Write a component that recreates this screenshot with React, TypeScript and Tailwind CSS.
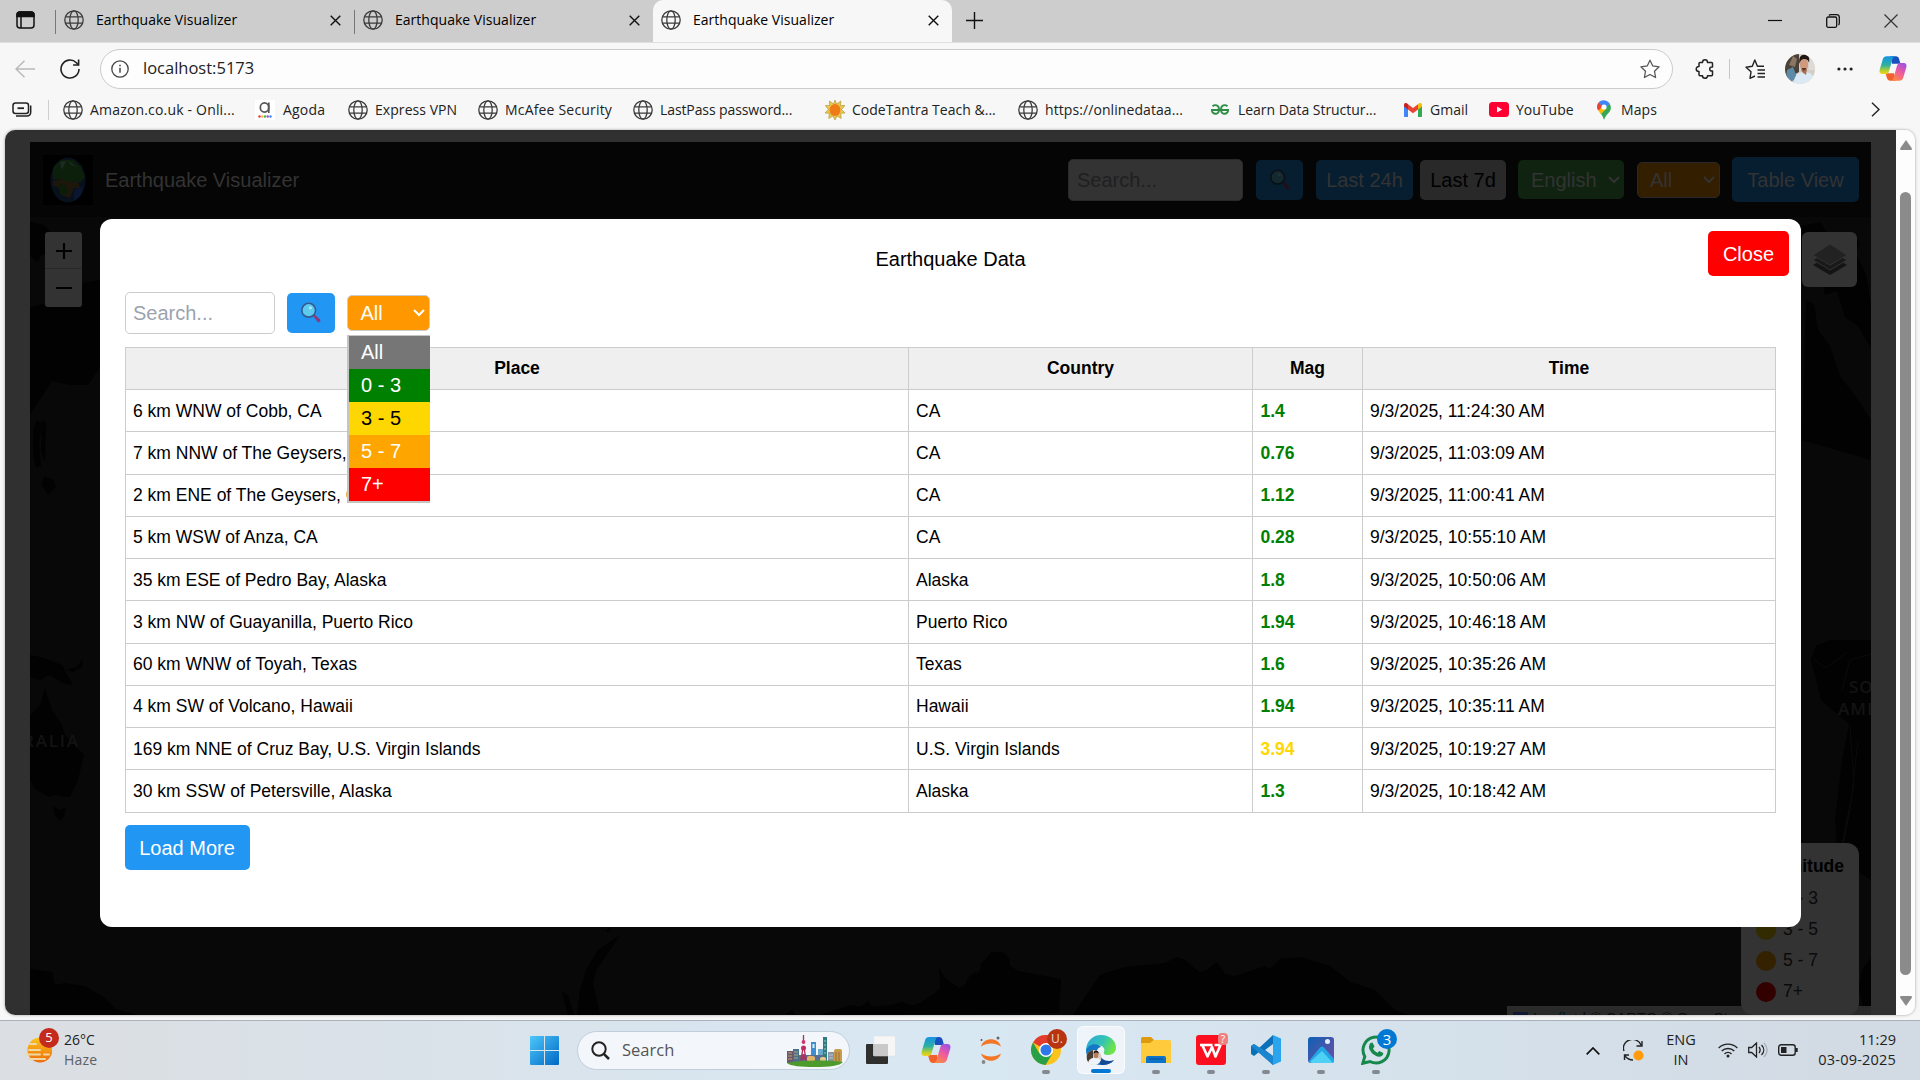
import React from "react";
import { clsx } from "clsx";

type P = { className?: string };

function Globe({ className = "" }: P) {
  return (
    <svg className={clsx("h-5 w-5 shrink-0", className)} viewBox="0 0 20 20" fill="none" stroke="#3b3b3b" strokeWidth="1.3">
      <circle cx="10" cy="10" r="9.2" />
      <ellipse cx="10" cy="10" rx="4.2" ry="9.2" />
      <path d="M1.6 6.9h16.8M1.6 13.1h16.8" />
    </svg>
  );
}

function Cross({ className = "" }: P) {
  return (
    <svg className={clsx("h-[11px] w-[11px] shrink-0", className)} viewBox="0 0 11 11" stroke="#111" strokeWidth="1.4">
      <path d="M.7.7l9.6 9.6M10.3.7L.7 10.3" />
    </svg>
  );
}

function Lens({ dim = false }: { dim?: boolean }) {
  return (
    <svg className="h-[22px] w-[22px]" viewBox="0 0 22 22" fill="none">
      <path d="M12.6 13.4l1.6-1.2 6 5.2c1 1.2-1 3.6-2.4 2.6z" fill={dim ? "#240d1a" : "#8b3a7d"} />
      <circle cx="8.7" cy="8.2" r="6.9" fill={dim ? "#13292f" : "#5ccbee"} stroke={dim ? "#091116" : "#37598f"} strokeWidth="1.6" />
      <circle cx="10.3" cy="5.8" r="1.6" fill={dim ? "#1d3338" : "#a9e8fa"} />
    </svg>
  );
}

function Chevron({ className = "" }: P) {
  return (
    <svg className={clsx("h-[8px] w-[12px] shrink-0", className)} viewBox="0 0 12 8" fill="none" stroke="currentColor" strokeWidth="2">
      <path d="M1 1l5 5 5-5" />
    </svg>
  );
}

function Copilot({ className = "", id }: P & { id: string }) {
  return (
    <svg className={className} viewBox="0 0 30 28">
      <defs>
        <linearGradient id={id + "a"} x1="0" y1="0" x2="0" y2="1">
          <stop offset="0" stopColor="#1494e4" />
          <stop offset=".5" stopColor="#2fb1a0" />
          <stop offset=".8" stopColor="#b6cf31" />
          <stop offset="1" stopColor="#f5d21c" />
        </linearGradient>
        <linearGradient id={id + "b"} x1=".8" y1="0" x2=".3" y2="1">
          <stop offset="0" stopColor="#a04fe8" />
          <stop offset=".5" stopColor="#ee5c9d" />
          <stop offset="1" stopColor="#fb8a43" />
        </linearGradient>
      </defs>
      <path d="M12 1h6c2 0 3 1 3.600 3l1.400 5h-9z" fill="#1a4fc0" />
      <path d="M18 27h-6c-2 0-3-1-3.600-3L7 19h9z" fill="#f2602c" />
      <path d="M8.500 1H18c-2 0-3 1-3.700 3.400l-3.500 12.200C10 19 9 20 7 20H3.600C1 20 0 18 .7 15.400L4 4.400C4.700 2 6 1 8.500 1z" fill={`url(#${id}a)`} />
      <path d="M21.500 27H12c2 0 3-1 3.700-3.400l3.500-12.200C20 9 21 8 23 8h3.400c2.600 0 3.600 2 2.900 4.600L26 23.600C25.300 26 24 27 21.500 27z" fill={`url(#${id}b)`} />
    </svg>
  );
}

/* ---------- browser chrome ---------- */

const tabTitle = "-mt-px ml-3 w-[142px] whitespace-nowrap text-[14px] tracking-[0.020px] text-black";

function TabStrip() {
  return (
    <div className="flex h-[42px] bg-[#cdcdcd]">
      <div className="flex h-10 w-[55px] items-center pl-4">
        <svg className="h-[18px] w-[19px]" viewBox="0 0 19 18" fill="none" stroke="#111" strokeWidth="1.500">
          <rect x="1" y="1" width="17" height="16" rx="3" />
          <path d="M1 4C1 2 2 1 4 1h11c2 0 3 1 3 3v1.500H1z" fill="#111" />
          <path d="M5 5v12" />
        </svg>
      </div>
      <div className="flex h-10 w-[299px] items-center">
        <div className="mt-1 h-6 w-px bg-[#777]" />
        <Globe className="ml-2" />
        <span className={tabTitle}>Earthquake Visualizer</span>
        <Cross className="ml-[92px] mt-px" />
      </div>
      <div className="flex h-10 w-[299px] items-center">
        <div className="mt-1 h-6 w-px bg-[#777]" />
        <Globe className="ml-2" />
        <span className={tabTitle}>Earthquake Visualizer</span>
        <Cross className="ml-[92px] mt-px" />
      </div>
      <div className="flex h-[42px] w-[299px] rounded-t-[10px] bg-[#f7f7f7]">
        <div className="flex h-10 items-center">
          <Globe className="ml-2" />
          <span className={tabTitle}>Earthquake Visualizer</span>
          <Cross className="ml-[93px] mt-px" />
        </div>
      </div>
      <div className="flex h-10 items-center pl-[14px]">
        <svg className="h-[17px] w-[17px]" viewBox="0 0 17 17" stroke="#111" strokeWidth="1.400">
          <path d="M0 8.500h17M8.500 0v17" />
        </svg>
      </div>
      <div className="ml-auto flex h-[42px] items-center gap-[44px] pr-[22px]">
        <svg className="h-[14px] w-[14px]" viewBox="0 0 14 14" stroke="#111" strokeWidth="1.200">
          <path d="M0 6.500h14" />
        </svg>
        <svg className="h-[14px] w-[14px]" viewBox="0 0 14 14" fill="none" stroke="#111" strokeWidth="1.300">
          <rect x=".7" y="3" width="10" height="10.300" rx="1.500" />
          <path d="M3 1.500C3.500.8 4 .7 5 .7h5.500c2 0 2.800 1 2.800 2.800V9c0 1-.2 1.500-.8 2" />
        </svg>
        <svg className="h-[14px] w-[14px]" viewBox="0 0 14 14" stroke="#333" strokeWidth="1.200">
          <path d="M.5.5l13 13M13.500.5l-13 13" />
        </svg>
      </div>
    </div>
  );
}

function AddressBar() {
  return (
    <div className="flex h-[47px] items-center border-t border-[#e0e0e0] bg-[#f7f7f7] pt-[5px]">
      <svg className="ml-[15px] h-[18px] w-5" viewBox="0 0 20 18" fill="none" stroke="#b9b9b9" strokeWidth="1.500">
        <path d="M20 9H1M9.500.7L1 9l8.500 8.300" />
      </svg>
      <svg className="ml-[25px] h-5 w-5" viewBox="0 0 20 20" fill="none" stroke="#222" strokeWidth="1.600">
        <path d="M19 10a9 9 0 1 1-2.600-6.300L18.500 6" />
        <path d="M18.600.5V6h-5.500" />
      </svg>
      <div className="ml-5 flex h-10 w-[1573px] items-center rounded-full border border-[#cbcbcb] bg-[#fdfdfd]">
        <svg className="ml-2.5 h-[18px] w-[18px]" viewBox="0 0 18 18" fill="none" stroke="#444" strokeWidth="1.300">
          <circle cx="9" cy="9" r="8.200" />
          <path d="M9 7.800v5M9 4.700v1.600" strokeWidth="1.500" />
        </svg>
        <span className="-mt-px ml-[14px] text-[16.500px] text-[#222]">localhost:5173</span>
        <svg className="ml-auto mr-[11px] h-5 w-[22px]" viewBox="0 0 22 21" fill="none" stroke="#555" strokeWidth="1.300" strokeLinejoin="round">
          <path d="M11 1.200l2.900 6.100 6.700.9-4.900 4.600 1.200 6.700-5.900-3.200-5.900 3.200 1.200-6.700L1.400 8.200l6.700-.9z" />
        </svg>
      </div>
      <svg className="ml-[22px] h-5 w-[20px]" viewBox="0 0 20 20" fill="none" stroke="#222" strokeWidth="1.500" strokeLinejoin="round">
        <path d="M5 3.500h2.500C7.500-.1 12.500-.1 12.500 3.500H16.500a1 1 0 0 1 1 1V8c-3.600-.7-3.800 4.700 0 4v3.700a1 1 0 0 1-1 1h-4c.2 3.400-5 3.400-5 0H5a1 1 0 0 1-1-1V12.500C.3 12.400.3 7.400 4 7.500v-3a1 1 0 0 1 1-1z" />
      </svg>
      <div className="ml-[14px] h-5 w-px bg-[#c6c6c6]" />
      <svg className="ml-[15px] h-5 w-5" viewBox="0 0 20 20" fill="none" stroke="#222" strokeWidth="1.400" strokeLinejoin="round">
        <path d="M10 17l-5 2.300 1-6.500L1 8.200l6.300-.9L9.800 1l2.600 6.300H19M12.500 11H20M12.500 14.500H20M12.500 18H20" />
      </svg>
      <svg className="ml-5 h-[30px] w-[30px]" viewBox="0 0 30 30">
        <clipPath id="face"><circle cx="15" cy="15" r="15" /></clipPath>
        <g clipPath="url(#face)">
          <rect width="30" height="30" fill="#d5cec6" />
          <path d="M0 0h14v18L0 26z" fill="#4a4238" />
          <path d="M8 2l4 3-2 8-6-2z" fill="#8a7663" />
          <path d="M22 0h8v16h-6z" fill="#dcdbd6" />
          <path d="M2 16l6-3 4 10-8 7H0z" fill="#5d8aa6" />
          <path d="M9 30c0-9 4-12 10-12 8 0 10 4 11 12z" fill="#dbe9f5" />
          <path d="M16 15h6l-1 6-4-3z" fill="#a86f52" />
          <ellipse cx="19" cy="10.500" rx="4.200" ry="6" fill="#d09a7e" />
          <path d="M14.500 10c-1-6 1-9.500 5-9.500s5.500 3 4.500 8.500c-.8-3-2-4-4.500-4s-4 1-5 5z" fill="#211611" />
          <path d="M16.500 14h5l-1.500 2.500h-2z" fill="#5a3527" />
        </g>
      </svg>
      <svg className="ml-[22px] h-1 w-4" viewBox="0 0 16 4" fill="#222">
        <circle cx="1.900" cy="2" r="1.600" /><circle cx="8" cy="2" r="1.600" /><circle cx="14.100" cy="2" r="1.600" />
      </svg>
      <Copilot id="ct" className="ml-[26px] h-[27px] w-[28px]" />
    </div>
  );
}

const bm = "flex shrink-0 items-center whitespace-nowrap";

function Bookmarks() {
  return (
    <div className="flex h-[41px] items-center bg-[#f7f7f7] text-[14px] text-[#222]">
      <svg className="ml-3 h-[15px] w-5" viewBox="0 0 20 15" fill="none" stroke="#222" strokeWidth="1.500">
        <rect x="1" y="1" width="15.500" height="10.500" rx="2.500" />
        <path d="M5.500 6.200h6.500" strokeWidth="1.800" />
        <path d="M18.700 3.500v6.500c0 2.500-1.500 4-4 4H4" />
      </svg>
      <div className="ml-4 h-5 w-px bg-[#cfcfcf]" />
      <div className={clsx(bm, "ml-[14px] w-[192px]")}><Globe /><span className="ml-[7px] tracking-[0.180px]">Amazon.co.uk - Onli...</span></div>
      <div className={clsx(bm, "w-[93px]")}>
        <svg className="h-5 w-5" viewBox="0 0 20 20" fill="none">
          <rect width="20" height="20" fill="#fff" />
          <ellipse cx="9.500" cy="7.500" rx="4.200" ry="4.600" stroke="#555" strokeWidth="1.700" />
          <path d="M13.800 2.500v10.500" stroke="#555" strokeWidth="1.700" />
          <circle cx="4.500" cy="16.500" r="1.200" fill="#e33" /><circle cx="7.300" cy="16.500" r="1.200" fill="#fb3" /><circle cx="10" cy="16.500" r="1.200" fill="#3b5" /><circle cx="12.700" cy="16.500" r="1.200" fill="#95c" /><circle cx="15.500" cy="16.500" r="1.200" fill="#38e" />
        </svg>
        <span className="ml-2 tracking-[0.180px]">Agoda</span>
      </div>
      <div className={clsx(bm, "w-[130px]")}><Globe /><span className="ml-[7px] tracking-[0.060px]">Express VPN</span></div>
      <div className={clsx(bm, "w-[155px]")}><Globe /><span className="ml-[7px] tracking-[0.180px]">McAfee Security</span></div>
      <div className={clsx(bm, "w-[192px]")}><Globe /><span className="ml-[7px] tracking-[-0.100px]">LastPass password...</span></div>
      <div className={clsx(bm, "w-[193px]")}>
        <svg className="h-5 w-5" viewBox="0 0 20 20">
          <path d="M10 0l1.600 4L15.800 1l-.2 4.500L20 5.500 16.500 9.500 20 13l-4.300.3.500 5.200-4-2.500L10 20l-2.200-4-4 2.500.5-5.200L0 13l3.300-3.500L.3 5.500l4.200 0L4.500 1l4 3z" fill="#e9c84b" stroke="#a98e32" strokeWidth=".6" />
          <ellipse cx="10" cy="10" rx="5.500" ry="6" fill="#ee7a18" />
        </svg>
        <span className="ml-[7px] tracking-[0.020px]">CodeTantra Teach &amp;...</span>
      </div>
      <div className={clsx(bm, "w-[193px]")}><Globe /><span className="ml-[7px] tracking-[0.080px]">https://onlinedataa...</span></div>
      <div className={clsx(bm, "w-[193px]")}>
        <svg className="h-[11px] w-[18px]" viewBox="0 0 18 11" fill="none" stroke="#2f8d46" strokeWidth="1.900">
          <path d="M0 6h18M1.500 2.300C4 .2 8 1 8 5.500S4 10.800 1.700 8.500C1 7.800 1 7 1 6M16.500 2.300C14 .2 10 1 10 5.500s4 5.300 6.300 3c.7-.7.7-1.500.7-2.500" />
        </svg>
        <span className="ml-[9px] tracking-[-0.040px]">Learn Data Structur...</span>
      </div>
      <div className={clsx(bm, "w-[85px]")}>
        <svg className="h-[14px] w-[18px]" viewBox="0 0 18 14">
          <path d="M0 2.500V13c0 .6.400 1 1 1h3V5z" fill="#4285f4" /><path d="M18 2.500V13c0 .6-.4 1-1 1h-3V5z" fill="#34a853" />
          <path d="M14 1.200L15.200.3C16.500-.5 18 .3 18 2v1.500L14 6.500z" fill="#fbbc04" /><path d="M4 1.200L2.800.3C1.500-.5 0 .3 0 2v1.500L4 6.500z" fill="#c5221f" />
          <path d="M4 1.200l5 3.800 5-3.800v5.300l-5 3.800-5-3.800z" fill="#ea4335" />
        </svg>
        <span className="ml-[8px]">Gmail</span>
      </div>
      <div className={clsx(bm, "w-[108px]")}>
        <svg className="h-[15px] w-5" viewBox="0 0 20 15"><rect width="20" height="15" rx="3.500" fill="#ff0033" /><path d="M8 4.500v6l5.200-3z" fill="#fff" /></svg>
        <span className="ml-[7px]">YouTube</span>
      </div>
      <div className={clsx(bm, "w-[100px]")}>
        <svg className="h-5 w-[14px]" viewBox="0 0 14 20">
          <path d="M7 20C6 16 4.500 14.500 2.500 12L12.700 3.500C15 8 13.500 11 11 13.500 9 15.700 8 17 7 20z" fill="#34a853" />
          <path d="M2.500 12C1 10.500 0 9 0 7l5-.5L9 9l-5 5z" fill="#fbbc04" />
          <path d="M0 7c0-2 .7-3.500 2-4.700L6 6l-4.500 4.500C.5 9.300 0 8 0 7z" fill="#ea4335" />
          <path d="M1.500 2.700C3-0 9-1.500 12.700 3.500L8 9 4 5z" fill="#4285f4" />
          <circle cx="7" cy="7" r="2.600" fill="#fff" />
        </svg>
        <span className="ml-[10px] tracking-[0.100px]">Maps</span>
      </div>
      <svg className="ml-auto mr-[40px] h-[15px] w-[9px]" viewBox="0 0 9 15" fill="none" stroke="#222" strokeWidth="1.400"><path d="M1 .7l7 6.800-7 6.800" /></svg>
    </div>
  );
}

/* ---------- dimmed page behind the dialog ---------- */

function MapCanvas() {
  return (
    <svg className="absolute inset-0 h-full w-full" viewBox="30 217 1841 798" preserveAspectRatio="none">
      <rect x="30" y="217" width="1841" height="798" fill="#080808" />
      <g fill="#020202">
        <path d="M30 222l14 3 8 9-6 5 10 8-8 3 3 8-9-4-4 8-8-6zM30 307l30-7 22-17 18-3v87l-12 18-18 0-18-4-22 34z" />
        <path d="M33 430l4-10 5 4-3 20 2 22-5 2-3-14zM42 420l4 2-1 40-4-10zM44 476l9 3 3 8-8 8-6-10z" />
        <path d="M30 655l14 3 18 7 11 20-10-2-13-8-10 5-10-3zM66 670l10-3 7-8-1 8-9 5zM30 715l10-10 5-17 7 22 10 15 3 10 19 20-6 25-8 17-15-2-6 2-14-8-5-9zM53 806l6 4 7-3-2 10-5 4-5-8z" />
        <path d="M30 969l22 3 3 13 10-2 20 3 20 12 8 8 2 3 11 3 11 3H30z" />
        <path d="M577 1015l3-25 6-20 12-20 22-15-12 18-12 18-3 12 7 32zM562 992l6 3 6 20h-6zM606 930l6-3-4 6z" />
        <path d="M786 1014l6-4 3 5zM820 1015l30-10 10 2 8-6 4 6 18-2 12-3 10 4 8-3 15-10 5-5-1-20 6 10 14 10 6-3 5-10 10-4 1-8 5-4 5-7h12l6 6 1 8 8 5 43 8-2 34zM1073 1015l10-15 17-25 25-8 40-4 12-6 8 3 14 12 8-2 10-8 8 12 10 2 30-10 5 3 10-10 20-2 30 9 20 16 25 8 20 20 20 7z" />
        <path d="M1802 226l18-4 8 12 12 4 6-6 14 10-4 12 10 20 5 30v45l-12-22-14-10-8-26-12 4-5-20-12-2zM1806 300l8 4 4 26 12 16 10 30 14 18 17 26v40l-69-20z" />
        <path d="M1811 660l5-14 14-6h41v240l-15-10-18-10-3-40 7-60 7-36-28-24z" />
        <path d="M1862 970l9-12v50h-8l-4-20z" />
      </g>
      <g fill="none" stroke="#0b0b0b"><path d="M1813 658l12 10 12-8 10-8M1842 690l8-30 21-6M1855 1000v-20M1850 725l4 60-12 60M1858 740l-8 70-8 40" /></g>
      <g fill="#131313" fontFamily="Open Sans, sans-serif" fontSize="17" fontWeight="600">
        <text x="23" y="747" textLength="55">RALIA</text><text x="1849" y="693" letterSpacing="1">SOUTH</text><text x="1838" y="715" letterSpacing="1">AMERICA</text>
      </g>
    </svg>
  );
}

function SiteHeader() {
  return (
    <div className="flex h-[75px] items-center bg-[#050505] text-[20px] text-[#333]">
      <div className="ml-[13px] flex h-[50px] w-[50px] items-center justify-center bg-black">
        <svg className="h-[46px] w-9" viewBox="0 0 36 46">
          <clipPath id="disc"><ellipse cx="18" cy="23" rx="17.500" ry="22.500" /></clipPath>
          <g clipPath="url(#disc)">
            <rect width="36" height="46" fill="#08101c" />
            <path d="M3 10l8-7 12 0 8 7 4 10-5 6-7-2-5 3-9-5-6 1z" fill="#0b1f0b" />
            <path d="M3 24l9-2 7 3 8-1 4 7-7 0-4 10-9-3-3-8-5-1z" fill="#1c170a" />
            <path d="M9 27l6 1 3 7-5 4-3-5z" fill="#0b1d08" />
            <path d="M10 5l6-1-4 9zM17 3l10 7-6-2z" fill="#1e2a26" />
            <path d="M24 33l9-4-2 10-7 5z" fill="#0a1530" />
          </g>
        </svg>
      </div>
      <span className="ml-3 whitespace-nowrap">Earthquake Visualizer</span>
      <div className="ml-auto flex items-center">
        <div className="flex h-[42px] w-[175px] items-center rounded-[5px] border border-[#292929] bg-[#333] pl-2 text-[#1f2022]">Search...</div>
        <div className="ml-[13px] flex h-10 w-[47px] items-center justify-center rounded-[5px] bg-[#071e31]"><Lens dim /></div>
        <div className="ml-[13px] flex h-10 w-[97px] items-center justify-center rounded-[5px] bg-[#071e31]">Last 24h</div>
        <div className="ml-[7px] flex h-10 w-[86px] items-center justify-center rounded-[5px] bg-[#292929] text-black">Last 7d</div>
        <div className="ml-3 flex h-[39px] w-[106px] items-center justify-between rounded-[5px] bg-[#0f2310] pl-[13px] pr-1"><span>English</span><Chevron /></div>
        <div className="ml-[13px] flex h-9 w-[83px] items-center justify-between rounded-[5px] border border-[#292929] bg-[#331e00] pl-3 pr-1"><span>All</span><Chevron /></div>
        <div className="ml-3 mr-3 flex h-[45px] w-[127px] items-center justify-center rounded-[5px] bg-[#071e31]">Table View</div>
      </div>
    </div>
  );
}

const legend = [
  { label: "0 - 3", dot: "bg-[#001a00]" },
  { label: "3 - 5", dot: "bg-[#332b00]" },
  { label: "5 - 7", dot: "bg-[#332100]" },
  { label: "7+", dot: "bg-[#330000]" },
];

function MapArea() {
  return (
    <div className="relative h-[798px] overflow-hidden">
      <MapCanvas />
      <div className="absolute left-[15px] top-[15px] w-[37px] overflow-hidden rounded-[3px] bg-[#333]">
        <div className="flex h-[37px] items-center justify-center border-b border-[#292929] pl-px pt-px">
          <svg className="h-4 w-4" viewBox="0 0 16 16" stroke="#000" strokeWidth="2.200"><path d="M0 8h16M8 0v16" /></svg>
        </div>
        <div className="flex h-[38px] items-center justify-center pl-px">
          <svg className="h-4 w-4" viewBox="0 0 16 16" stroke="#000" strokeWidth="2"><path d="M0 8h16" /></svg>
        </div>
      </div>
      <div className="absolute right-[14px] top-[15px] flex h-[55px] w-[55px] items-center justify-center rounded-md bg-[#333]">
        <svg className="h-[33px] w-[34px]" viewBox="0 0 34 33">
          <path d="M17 12L34 22 17 32 0 22z" fill="#141414" /><path d="M17 7l17 10-17 10L0 17z" fill="#1a1a1a" stroke="#333" /><path d="M17 1l17 11-17 10L0 12z" fill="#222" stroke="#333" />
        </svg>
      </div>
      <div className="absolute right-0 top-[789px] flex h-[22px] w-[364px] items-center bg-[#2a2a2a] pl-[6px] text-[15px] leading-none text-[#0a0a0a]">
        <span className="mr-[5px] h-2.5 w-[15px] bg-[#0f1a30]" />
        <span className="whitespace-nowrap"><span className="text-[#001823]">Leaflet</span> | © CARTO © OpenStreetMap contributors</span>
      </div>
      <div className="absolute right-3 top-[626px] h-[172px] w-[118px] rounded-[12px] bg-[#333] px-[15px] pt-[10px] text-[17.500px] text-[#0a0a0a]">
        <div className="flex h-[26px] items-center justify-end font-bold text-black">Magnitude</div>
        <div className="mt-[4px]">
          {legend.map((l) => (
            <div key={l.label} className="flex h-[31px] items-center gap-[7px]">
              <span className={clsx("h-5 w-5 rounded-full", l.dot)} />{l.label}
            </div>
          ))}
        </div>
      </div>
    </div>
  );
}

/* ---------- dialog ---------- */

const rows = [
  ["6 km WNW of Cobb, CA", "CA", "1.4", "9/3/2025, 11:24:30 AM", "h-[42px]", "pt-[2px]"],
  ["7 km NNW of The Geysers, CA", "CA", "0.76", "9/3/2025, 11:03:09 AM", "h-[43px]", "pt-[1px]"],
  ["2 km ENE of The Geysers, CA", "CA", "1.12", "9/3/2025, 11:00:41 AM", "h-[42px]", "pt-0"],
  ["5 km WSW of Anza, CA", "CA", "0.28", "9/3/2025, 10:55:10 AM", "h-[42px]", "pt-0"],
  ["35 km ESE of Pedro Bay, Alaska", "Alaska", "1.8", "9/3/2025, 10:50:06 AM", "h-[42px]", "pt-[2px]"],
  ["3 km NW of Guayanilla, Puerto Rico", "Puerto Rico", "1.94", "9/3/2025, 10:46:18 AM", "h-[43px]", "pt-[1px]"],
  ["60 km WNW of Toyah, Texas", "Texas", "1.6", "9/3/2025, 10:35:26 AM", "h-[42px]", "pt-0"],
  ["4 km SW of Volcano, Hawaii", "Hawaii", "1.94", "9/3/2025, 10:35:11 AM", "h-[42px]", "pt-0"],
  ["169 km NNE of Cruz Bay, U.S. Virgin Islands", "U.S. Virgin Islands", "3.94", "9/3/2025, 10:19:27 AM", "h-[42px]", "pt-[2px]"],
  ["30 km SSW of Petersville, Alaska", "Alaska", "1.3", "9/3/2025, 10:18:42 AM", "h-[43px]", "pt-[1px]"],
];

const cell = "border-b border-r border-[#ccc] p-0";

function Dialog() {
  return (
    <div className="absolute left-[95px] top-[89px] flex h-[708px] w-[1701px] flex-col rounded-[12px] bg-white px-[25px] font-['Liberation_Sans',Arial,sans-serif] text-black">
      <div className="mt-[25px] flex h-[30px] items-center justify-center text-[20px]">Earthquake Data</div>
      <button className="absolute right-3 top-3 h-[45px] w-[81px] rounded-[5px] bg-[#ff0000] text-[20px] text-white">Close</button>
      <div className="mt-[18px] flex h-[42px] items-center text-[20px]">
        <div className="flex h-[42px] w-[150px] items-center rounded-[5px] border border-[#ccc] pl-[7px] text-[#9ca3af]">Search...</div>
        <button className="ml-3 flex h-10 w-12 items-center justify-center rounded-[5px] bg-[#2196f3]"><Lens /></button>
        <div className="relative ml-3 flex h-9 w-[83px] items-center justify-between rounded-[5px] border border-[#ccc] bg-[#ff9800] pl-[12.500px] pr-1 text-white">
          <span>All</span><Chevron />
          <div className="absolute -left-px top-[39px] z-10 w-[83px] border-b-2 border-l-2 border-t border-[#c4c4c4] [&>div]:flex [&>div]:h-[33px] [&>div]:items-center [&>div]:pb-[2px] [&>div]:pl-3">
            <div className="bg-[#767676]">All</div>
            <div className="bg-[#008000]">0 - 3</div>
            <div className="bg-[#ffd700] text-black">3 - 5</div>
            <div className="bg-[#ffa500]">5 - 7</div>
            <div className="bg-[#ff0000]">7+</div>
          </div>
        </div>
      </div>
      <table className="mt-[13px] w-[1651px] table-fixed border-separate border-spacing-0 border-l border-t border-[#ccc] text-[17.500px]">
        <colgroup><col className="w-[783px]" /><col className="w-[344px]" /><col className="w-[110px]" /><col /></colgroup>
        <thead>
          <tr className="h-[42px] bg-[#efefef]">
            {["Place", "Country", "Mag", "Time"].map((h) => <th key={h} className={clsx(cell, "text-center font-bold leading-none")}>{h}</th>)}
          </tr>
        </thead>
        <tbody>
          {rows.map(([p, c, m, t, h, pt]) => (
            <tr key={p} className={h}>
              <td className={cell}><div className={clsx("pl-[7px] leading-none", pt)}>{p}</div></td>
              <td className={cell}><div className={clsx("pl-[7px] leading-none", pt)}>{c}</div></td>
              <td className={cell}><div className={clsx("pl-[7.500px] font-bold leading-none", pt, Number(m) > 3 ? "text-[#ffd700]" : "text-[#008000]")}>{m}</div></td>
              <td className={cell}><div className={clsx("pl-[7px] leading-none", pt)}>{t}</div></td>
            </tr>
          ))}
        </tbody>
      </table>
      <button className="mt-3 h-[45px] w-[125px] rounded-[5px] bg-[#2196f3] pr-px text-[20px] text-white">Load More</button>
    </div>
  );
}

/* ---------- taskbar ---------- */

function TaskCell({ children, active, running }: { children: React.ReactNode; active?: boolean; running?: boolean }) {
  return (
    <div className={clsx("relative mr-[7px] flex h-12 w-12 items-center justify-center rounded-md", active && "border border-white/70 bg-[#eef4fa]")}>
      {children}
      {(active || running) && <span className={clsx("absolute bottom-0 h-1 rounded-full", active ? "w-5 bg-[#0078d4]" : "w-2 bg-[#838990]")} />}
    </div>
  );
}

function Skyline() {
  return (
    <svg className="h-8 w-14" viewBox="0 0 56 32">
      <rect x="0" y="16" width="6" height="12" fill="#6b5670" /><rect x="6" y="14" width="6" height="14" fill="#47708b" />
      <path d="M1 18h4M1 21h4M1 24h4M7 17h4M7 20h4M7 23h4" stroke="#d9b26a" strokeWidth=".8" />
      <rect x="24" y="7" width="5" height="20" fill="#3f8ed0" /><rect x="25.500" y="9" width="2" height="4" fill="#d9effa" />
      <rect x="36" y="2" width="4" height="25" fill="#2f7c80" /><rect x="31" y="14" width="5" height="12" fill="#6aa9c9" /><rect x="41" y="17" width="6" height="10" fill="#8a93a5" />
      <path d="M37 6h2M37 10h2M37 14h2M37 18h2M42 20h4M42 23h4" stroke="#b7dfe0" strokeWidth=".8" />
      <rect x="47" y="14" width="8" height="14" rx="2" fill="#c99b4d" /><path d="M49 17v9M52 17v9" stroke="#8f6428" strokeWidth=".8" />
      <rect x="12" y="20" width="24" height="8" fill="#57708f" /><rect x="20" y="21" width="8" height="6" rx="2" fill="#e1b36a" /><rect x="33" y="22" width="6" height="5" rx="2" fill="#e8c68b" />
      <path d="M16.500 0v8M14 26l2-14h1l2 14" stroke="#b32b58" strokeWidth="1.300" fill="none" />
      <circle cx="16.500" cy="7" r="1.900" fill="#d2356a" /><circle cx="16.500" cy="13" r="2.500" fill="#c22b62" /><circle cx="16.500" cy="22" r="3" fill="#a83561" />
      <path d="M0 28c14-3 42-3 56-1-3 4-14 5-28 5S3 31 0 28z" fill="#4d9b2c" />
    </svg>
  );
}

function Taskbar() {
  return (
    <div className="flex h-[60px] items-center border-t border-[#a9b1ba] bg-linear-to-r from-[#dbdee2] via-[#d8e8f3] to-[#d2dae3] text-[#222]">
      <div className="relative ml-[25px] h-7 w-[27px]">
        <svg className="h-7 w-[27px]" viewBox="0 0 27 28">
          <defs><linearGradient id="sun" x1="0" y1="0" x2="0" y2="1"><stop offset="0" stopColor="#fcc51c" /><stop offset="1" stopColor="#ed6a0c" /></linearGradient></defs>
          <circle cx="15" cy="13" r="12.500" fill="url(#sun)" />
          <path d="M5 7h6M4 13h11M0 17.500h15M19 17.500h5M4 22h16" stroke="#eed9a4" strokeWidth="2" strokeLinecap="round" />
        </svg>
        <span className="absolute -top-[9px] left-[14px] flex h-5 w-5 items-center justify-center rounded-full bg-[#c42b1c] text-[13px] leading-none text-white">5</span>
      </div>
      <div className="-mt-0.5 ml-3 w-[80px] text-[14px] leading-5"><div>26°C</div><div className="tracking-[0.200px] text-[#5b6167]">Haze</div></div>
      <svg className="ml-[386px] h-[29px] w-[29px]" viewBox="0 0 29 29">
        <defs><linearGradient id="win" x1="0" y1="0" x2="1" y2="1"><stop offset="0" stopColor="#4cc8fb" /><stop offset="1" stopColor="#0068c4" /></linearGradient></defs>
        <path d="M0 1q0-1 1-1h13v14H0zM15 0h13q1 0 1 1v13H15zM0 15h14v14H1q-1 0-1-1zM15 15h14v13q0 1-1 1H15z" fill="url(#win)" />
      </svg>
      <div className="ml-[18px] flex h-[39px] w-[273px] items-center rounded-full border border-[#c0cddb] bg-[#f3f7fb]">
        <svg className="ml-[13px] h-[19px] w-[19px]" viewBox="0 0 19 19" fill="none" stroke="#222" strokeWidth="2"><circle cx="8" cy="8" r="6.700" /><path d="M12.800 12.800L18 18" strokeWidth="2.500" /></svg>
        <span className="ml-[12px] text-[16.500px] text-[#555]">Search</span>
        <span className="ml-auto mr-[6px]"><Skyline /></span>
      </div>
      <div className="-mt-px ml-[7px] flex items-center">
        <TaskCell>
          <svg className="h-7 w-[30px]" viewBox="0 0 30 28"><rect x="0" y="8" width="22" height="20" rx="1" fill="#2f2f2d" /><rect x="7.500" y="0" width="22" height="20" rx="1" fill="#f6f6f6" stroke="#ddd" strokeWidth=".5" /><path d="M7.500 8H22v12H7.500z" fill="#c9c9c9" /></svg>
        </TaskCell>
        <TaskCell><Copilot id="cb" className="h-7 w-[30px]" /></TaskCell>
        <TaskCell>
          <svg className="h-[28px] w-[22px]" viewBox="0 0 22 28"><path d="M1 10.500C4 .8 18 .8 21 10.500 15 6.500 7 6.500 1 10.500zM1 17.500C4 27.200 18 27.200 21 17.500c-6 4-14 4-20 0z" fill="#f37726" /><circle cx="18" cy="2" r="1.500" fill="#666" /><circle cx="1.500" cy="4" r="1" fill="#555" /><circle cx="3.500" cy="26" r="1.900" fill="#888" /></svg>
        </TaskCell>
        <TaskCell running>
          <svg className="h-[30px] w-[30px]" viewBox="0 0 30 30">
            <circle cx="15" cy="15" r="15" fill="#fbc31b" />
            <path d="M15 15L2 7.500A15 15 0 0 1 28 7.500L28.500 8.500H15z" fill="#e33b2e" />
            <path d="M2 7.500A15 15 0 0 0 14.500 30L21.500 18.500 15 15 8.500 18.600z" fill="#27a048" />
            <circle cx="15" cy="15" r="7" fill="#fff" /><circle cx="15" cy="15" r="5.500" fill="#2f78ea" />
          </svg>
          <span className="absolute right-[3px] top-[3px] flex h-5 w-5 items-center justify-center rounded-full bg-[#b8330f] text-[12px] text-[#e9d8d2]">U.</span>
        </TaskCell>
        <TaskCell active>
          <svg className="h-[30px] w-[30px]" viewBox="0 0 30 30">
            <defs>
              <linearGradient id="e1" x1="0" x2="1" y1="0" y2=".4"><stop offset="0" stopColor="#2aa6de" /><stop offset=".6" stopColor="#34c3b4" /><stop offset="1" stopColor="#6de34a" /></linearGradient>
            </defs>
            <path d="M15 0c9 0 15 6 15 12.500 0 5-4 7.500-8 7.500-3 0-5-1-4-3 1.500-3-1-6.500-5-6.500C7 10.500 2 13 0 16 0 6 7 0 15 0z" fill="url(#e1)" />
            <path d="M0 15c2-6 11-8 15-3-5 1-6 7-2 12 4 4 10 4 15 1-3 4-8 5-13 5C7 30 0 24 0 15z" fill="#1478c4" />
            <path d="M13 18c1 6 8 10 15 7-3 4-8 5-12 5-5-2-5-8-3-12z" fill="#124a94" />
            <clipPath id="mini"><circle cx="8" cy="22.500" r="7.500" /></clipPath>
            <g clipPath="url(#mini)">
              <rect y="14" width="16" height="16" fill="#d8ccc2" />
              <path d="M0 14h7v10l-6 4z" fill="#4a3d33" />
              <path d="M2 30c0-7 4-7 8-7s6 3 6 7z" fill="#eef3f8" />
              <ellipse cx="10" cy="20" rx="2.300" ry="3.200" fill="#b87b5c" /><path d="M7.500 19c0-5 5.500-5 5.200 0-1-2-4-2-5.200 0z" fill="#1d1310" />
            </g>
          </svg>
        </TaskCell>
        <TaskCell running>
          <svg className="h-[26px] w-[30px]" viewBox="0 0 30 26"><path d="M0 1.500Q0 0 1.500 0H10l3 3-3 4H0z" fill="#dc9a0c" /><path d="M0 6h9l4-3h15.500Q30 3 30 4.500V26H0z" fill="#fdcb3c" /><path d="M5 21q0-2 2-2h16q2 0 2 2v5H5z" fill="#0e74c8" /><path d="M8 22h14" stroke="#0a4f94" /></svg>
        </TaskCell>
        <TaskCell running>
          <svg className="h-[30px] w-[30px]" viewBox="0 0 30 30"><rect width="30" height="30" rx="3" fill="#fc0f1f" /><path d="M4 10h12.500M6.500 10.500l5 11 4.500-9.500 3.500 9.500 5-11.500h-6" fill="none" stroke="#fff" strokeWidth="2.600" strokeLinejoin="round" /></svg>
          <span className="absolute right-[7px] top-[7px] flex h-3 w-2.5 items-center justify-center rounded-sm bg-[#f08080] text-[10px] text-white">?</span>
        </TaskCell>
        <TaskCell running>
          <svg className="h-[30px] w-[30px]" viewBox="0 0 30 30"><path d="M22 0L8 13 3 9 0 11v8l3 2 5-4 14 13V21l-8-6 8-6z" fill="#0b70b8" /><path d="M0 11l22 19V21L3 9z" fill="#1a86d0" /><path d="M22 0l8 3.500v23L22 30z" fill="#2ba4ee" /></svg>
        </TaskCell>
        <TaskCell running>
          <svg className="h-[26px] w-[26px]" viewBox="0 0 26 26">
            <defs><linearGradient id="ph" x1="0" x2="1" y1="0" y2="1"><stop offset="0" stopColor="#0c62b4" /><stop offset="1" stopColor="#764ba5" /></linearGradient></defs>
            <rect width="26" height="26" rx="3" fill="url(#ph)" /><path d="M1 24L12 10.500q2-2 4 0L26 22v2q0 2-2 2H3q-2 0-2-2z" fill="#22a6e6" /><path d="M2 25l12-11 11 12H4z" fill="#4fd0f5" /><circle cx="19.500" cy="4.500" r="2.500" fill="#e7eefc" />
          </svg>
        </TaskCell>
        <TaskCell running>
          <svg className="h-[30px] w-[30px]" viewBox="0 0 30 30" fill="none"><path d="M1.800 28.300l2-6.800A13 13 0 1 1 9 26.500z" stroke="#16884c" strokeWidth="3" /><path d="M9.500 8l2-.5 2 4-1.500 2c1 2 2.500 3.500 4.500 4.300l1.800-1.800 4 2c0 4-5 4.600-8 2.500-3-1.500-5-4-6-6.500-.8-2 0-5 1.200-6z" fill="#16884c" /></svg>
          <span className="absolute right-[3px] top-[3px] flex h-5 w-5 items-center justify-center rounded-full bg-[#0078d4] text-[15px] leading-none text-white">3</span>
        </TaskCell>
      </div>
      <svg className="ml-[179px] h-2 w-[14px]" viewBox="0 0 14 8" fill="none" stroke="#111" strokeWidth="1.700"><path d="M.7 7.300L7 1l6.300 6.300" /></svg>
      <svg className="ml-[23px] h-[21px] w-[21px]" viewBox="0 0 21 21" fill="none" stroke="#222" strokeWidth="1.400"><path d="M1 11A9 8.500 0 0 1 18 5M19 1v5h-5.500M1.500 20v-5H6M2 16c2 2.500 5 4 8 4" /><circle cx="15.500" cy="15.500" r="5" fill="#ff9a0a" stroke="none" /></svg>
      <div className="-mt-px ml-[17px] w-[40px] text-center text-[14.500px] leading-5"><div>ENG</div><div>IN</div></div>
      <svg className="-mt-0.5 ml-[17px] h-4 w-5" viewBox="0 0 20 16" fill="none" stroke="#222" strokeWidth="1.400"><path d="M.7 6a13 13 0 0 1 18.600 0M3.700 9a9 9 0 0 1 12.600 0M6.500 12a5 5 0 0 1 7 0" /><circle cx="10" cy="14" r="1.500" fill="#222" stroke="none" /></svg>
      <svg className="-mt-px ml-[10px] h-4 w-5" viewBox="0 0 20 16" fill="none" stroke="#222" strokeWidth="1.300"><path d="M.7 5.500h3L8.500 1v14l-4.800-4.500h-3zM11 5c1.500 2 1.500 4 0 6M13.500 3c3 3 3 7 0 10" /><path d="M16 1c4 4.500 4 9.500 0 14" stroke="#a9b0b8" /></svg>
      <svg className="-mt-px ml-[10px] h-3 w-5" viewBox="0 0 20 12" fill="none" stroke="#222" strokeWidth="1.400"><rect x=".7" y=".7" width="16.500" height="10.600" rx="2.500" /><rect x="3" y="3" width="5.500" height="6" fill="#222" stroke="none" /><path d="M18.500 4v4" strokeWidth="2.400" /></svg>
      <div className="-mt-px ml-auto mr-6 text-right text-[14.500px] leading-5"><div>11:29</div><div className="tracking-[0.200px]">03-09-2025</div></div>
    </div>
  );
}

export default function App() {
  return (
    <div className="flex h-[1080px] w-[1920px] flex-col overflow-hidden bg-[#f7f7f7] font-['Open_Sans','Noto_Sans',sans-serif]">
      <TabStrip />
      <AddressBar />
      <Bookmarks />
      <div className="mb-[5px] ml-[5px] mr-[5px] flex h-[885px] overflow-hidden rounded-[10px] shadow-[0_0_3px_#999]">
        <div className="relative w-[1891px] bg-[#303030] px-[25px] pt-3 font-['Liberation_Sans',Arial,sans-serif]">
          <SiteHeader />
          <MapArea />
          <Dialog />
        </div>
        <div className="flex w-[19px] flex-col items-center bg-[#fdfdfd]">
          <svg className="mt-[10px] h-[10px] w-3" viewBox="0 0 12 10"><path d="M6 0l6 8.500q0 1.500-1 1.500H1Q0 10 0 8.500z" fill="#8b8b8b" /></svg>
          <div className="mt-[42px] h-[783px] w-[11px] rounded-full bg-[#8b8b8b]" />
          <svg className="mt-[21px] h-[10px] w-3" viewBox="0 0 12 10"><path d="M6 10L0 1.500Q0 0 1 0h10q1 0 1 1.500z" fill="#8b8b8b" /></svg>
        </div>
      </div>
      <Taskbar />
    </div>
  );
}
